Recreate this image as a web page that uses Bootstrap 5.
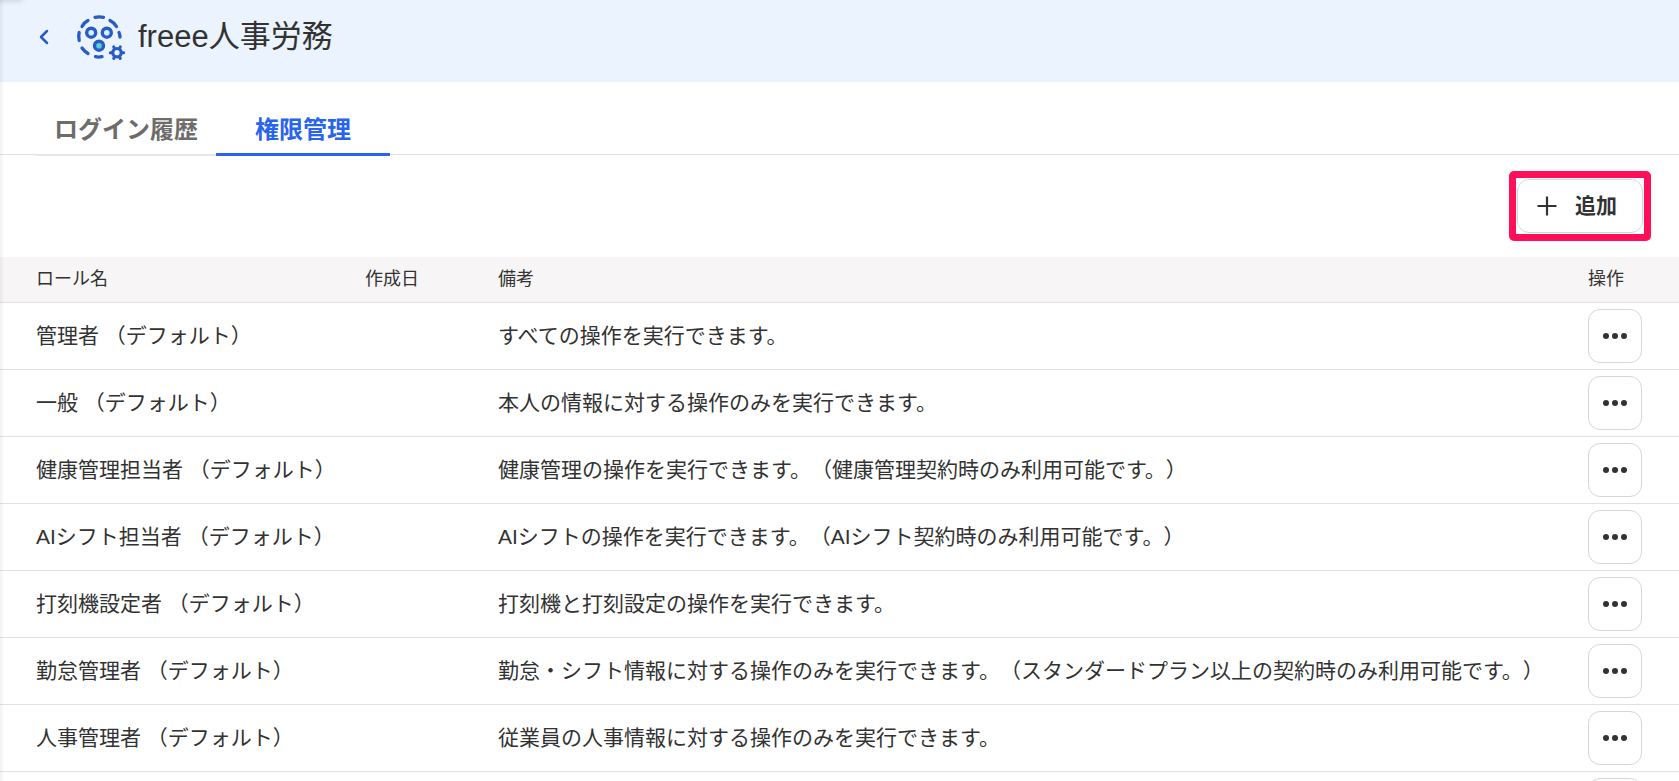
<!DOCTYPE html>
<html lang="ja">
<head>
<meta charset="utf-8">
<meta name="viewport" content="width=device-width, initial-scale=1">
<title>freee人事労務</title>
<link href="https://cdn.jsdelivr.net/npm/bootstrap@5.3.0/dist/css/bootstrap.min.css" rel="stylesheet">
<style>
  :root { --ink: #323232; --blue: #2864f0; --logo: #285ac8; --line: #e1e1e1; --gutter: 36px; }
  body { font-family: "Liberation Sans", "Noto Sans CJK JP", sans-serif; font-size: 21px; line-height: 30px; color: var(--ink); height: 100vh; overflow: hidden; text-spacing-trim: space-all; }
  .edge-shade { position: fixed; inset: 0 auto 0 0; width: 4px; background: linear-gradient(90deg, rgba(0,0,0,.06), rgba(0,0,0,0)); pointer-events: none; }
  .corner-shade { position: fixed; top: -10px; left: -10px; width: 32px; height: 10px; box-shadow: 0 0 6px rgba(0,0,0,.2); pointer-events: none; }
  .app-head { height: 82px; padding: 0 var(--gutter) 8px; background: #ebf3ff; }
  .back-link { width: 16px; height: 24px; color: var(--logo); }
  .app-title { margin-left: 12px; font-size: 31px; line-height: 40px; }
  .tab-bar { padding: 24px var(--gutter) 0; border-bottom: 1px solid var(--line); }
  .tab-bar .nav-link { height: 50px; margin-bottom: -2px; padding: 0 18px; border-radius: 0; border-bottom: 2px solid #e6e6e6; font-size: 24px; font-weight: 700; color: #6e6b6b; }
  .tab-bar .nav-link.active { padding: 0 39px; border-bottom: 3px solid var(--blue); color: var(--blue); }
  .tool-row { padding: 24px var(--gutter); }
  .soft-btn { height: 54px; background: #fff; border: 1px solid #d7d7d7; border-radius: 12px; color: var(--ink); }
  .soft-btn:hover { background: #f7f5f5; border-color: #d7d7d7; }
  .add-btn { width: 126px; padding: 0 8px 0 0; font-size: 21px; font-weight: 700; }
  .add-ring { position: absolute; inset: -8px; border: 7px solid #ff0f5a; border-radius: 5px; pointer-events: none; }
  .more-btn { width: 54px; padding: 0; }
  .role-table { table-layout: fixed; border-color: var(--line); color: var(--ink); }
  .role-table th, .role-table td { padding: 6px 0; vertical-align: middle; white-space: nowrap; border-bottom: 1px solid var(--line); color: var(--ink); }
  .role-table th { padding: 7px 0 8px; font-size: 18px; font-weight: 400; background: #f7f5f5; }
  .role-table tr > :first-child { padding-left: var(--gutter); }
  .c-name { width: 365px; } .c-date { width: 133px; } .c-act { width: 91px; }
</style>
</head>
<body>
<header class="app-head d-flex align-items-center">
  <a href="#" class="back-link d-flex align-items-center" aria-label="戻る">
    <svg width="16" height="24" viewBox="0 0 16 24" fill="none" stroke="currentColor" stroke-width="2.5" stroke-linecap="round" stroke-linejoin="round"><path d="M11 6 5 12l6 6"/></svg>
  </a>
  <svg class="ms-4" width="50" height="48" viewBox="0 0 50 48" fill="none" stroke="#285ac8" stroke-linecap="round" aria-hidden="true">
    <path stroke-width="3.300" d="M19 4.300Q23 3.500 27.500 4.300M34 7.500Q38 9.500 40.500 13.500M43 19.500Q44 22 44 24M12 7.500Q8 9.500 6 13.500M3.200 19.500Q2.200 23 3.200 27.500M6 35Q8 38 12 40.500M19.500 43.700Q22.500 44.400 26 43.700"/>
    <g stroke-width="3.400"><circle cx="15.200" cy="19.700" r="4.500" fill="#d2f5f0"/><circle cx="30.800" cy="19.700" r="4.500" fill="#d2f5f0"/><circle cx="23" cy="32.700" r="4.500" fill="#5ad2d2"/></g>
    <g transform="translate(41 39.700)" stroke-width="3"><circle r="4.200" stroke-width="3.200"/><path d="M5.500 0H6.700M-5.500 0H-6.700M2.800 4.800 3.300 5.800M-2.800 4.800-3.300 5.800M2.800-4.800 3.300-5.800M-2.800-4.800-3.300-5.800"/></g>
  </svg>
  <h1 class="app-title fw-normal mb-0">freee人事労務</h1>
</header>

<nav class="nav tab-bar">
  <a class="nav-link d-flex align-items-center" href="#">ログイン履歴</a>
  <a class="nav-link active d-flex align-items-center" href="#" aria-current="page">権限管理</a>
</nav>

<main>
  <div class="tool-row d-flex justify-content-end">
    <div class="position-relative">
      <button type="button" class="btn soft-btn add-btn d-flex align-items-center justify-content-center gap-3">
        <svg width="24" height="24" viewBox="0 0 24 24" stroke="currentColor" stroke-width="2.200"><path d="M12 2.500v19M2.500 12h19"/></svg>
        追加
      </button>
      <span class="add-ring"></span>
    </div>
  </div>

  <table class="table role-table mb-0">
    <colgroup><col class="c-name"><col class="c-date"><col><col class="c-act"></colgroup>
    <thead>
      <tr><th scope="col">ロール名</th><th scope="col">作成日</th><th scope="col">備考</th><th scope="col">操作</th></tr>
    </thead>
    <tbody id="roles"></tbody>
  </table>
</main>

<div class="edge-shade"></div>
<div class="corner-shade"></div>

<script src="https://cdn.jsdelivr.net/npm/bootstrap@5.3.0/dist/js/bootstrap.bundle.min.js"></script>
<script>
  const roles = [
    ["管理者", "すべての操作を実行できます。"],
    ["一般", "本人の情報に対する操作のみを実行できます。"],
    ["健康管理担当者", "健康管理の操作を実行できます。（健康管理契約時のみ利用可能です。）"],
    ["AIシフト担当者", "AIシフトの操作を実行できます。（AIシフト契約時のみ利用可能です。）"],
    ["打刻機設定者", "打刻機と打刻設定の操作を実行できます。"],
    ["勤怠管理者", "勤怠・シフト情報に対する操作のみを実行できます。（スタンダードプラン以上の契約時のみ利用可能です。）"],
    ["人事管理者", "従業員の人事情報に対する操作のみを実行できます。"],
    ["", ""]
  ];
  document.getElementById("roles").innerHTML = roles.map(([name, note]) => `
    <tr>
      <td>${name ? name + " （デフォルト）" : ""}</td><td></td><td>${note}</td>
      <td><button type="button" class="btn soft-btn more-btn d-flex align-items-center justify-content-center" aria-label="操作">
        <svg width="26" height="8" viewBox="0 0 26 8" fill="currentColor"><circle cx="4" cy="4" r="3"/><circle cx="13" cy="4" r="3"/><circle cx="22" cy="4" r="3"/></svg>
      </button></td>
    </tr>`).join("");
</script>
</body>
</html>
